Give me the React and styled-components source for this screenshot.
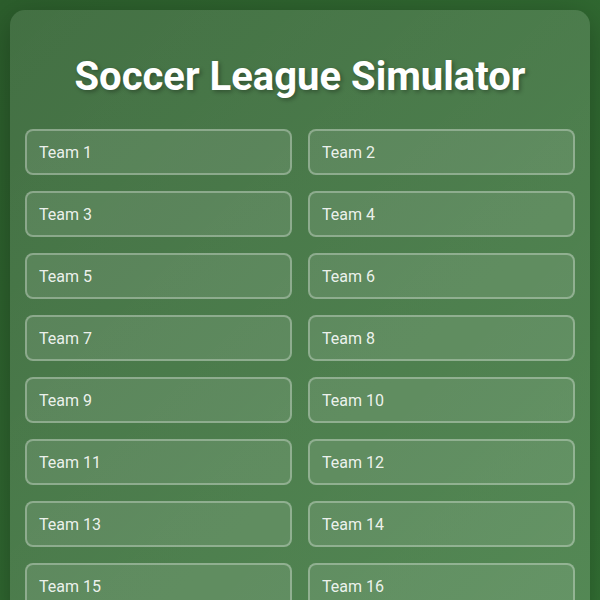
import React from "react";
import styled, { createGlobalStyle } from "styled-components";

const GlobalStyle = createGlobalStyle`
  * { box-sizing: border-box; }
  html, body { margin: 0; padding: 0; }
  body {
    font-family: Roboto, "Liberation Sans", Arial, sans-serif;
    background: linear-gradient(135deg, #2c5e2c 0%, #347335 100%);
    min-height: 100vh;
    color: #fff;
  }
`;

const Page = styled.div`
  padding: 10px;
  min-height: 100vh;
`;

const Card = styled.div`
  background: linear-gradient(135deg, rgba(255,255,255,0.11), rgba(255,255,255,0.16));
  border-radius: 15px;
  padding: 20px 15px;
  box-shadow: 0 8px 32px rgba(0,0,0,0.3);
`;

const Title = styled.h1`
  margin: 23px 0 28px;
  text-align: center;
  font-size: 40px;
  font-weight: 700;
  line-height: 1.2;
  color: #fff;
  text-shadow: 2px 2px 4px rgba(0,0,0,0.3);
`;

const Grid = styled.div`
  display: grid;
  grid-template-columns: 1fr 1fr;
  gap: 16px;
`;

const TeamInput = styled.input`
  height: 46px;
  width: 100%;
  padding: 12px;
  border: 2px solid rgba(255,255,255,0.3);
  border-radius: 8px;
  background: rgba(255,255,255,0.1);
  color: #fff;
  font-family: Roboto, "Liberation Sans", Arial, sans-serif;
  font-size: 16px;
  outline: none;
  &::placeholder { color: rgba(255,255,255,0.9); }
`;

export default function App() {
  const teams = Array.from({ length: 16 }, (_, i) => `Team ${i + 1}`);
  return (
    <>
      <GlobalStyle />
      <Page>
        <Card>
          <Title>Soccer League Simulator</Title>
          <Grid>
            {teams.map((t) => (
              <TeamInput key={t} placeholder={t} />
            ))}
          </Grid>
        </Card>
      </Page>
    </>
  );
}
